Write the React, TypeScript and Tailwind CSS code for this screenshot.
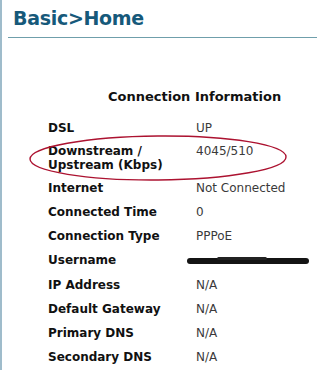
const rows: { label: string[]; value: string }[] = [
  { label: ["DSL"], value: "UP" },
  { label: ["Downstream /", "Upstream (Kbps)"], value: "4045/510" },
  { label: ["Internet"], value: "Not Connected" },
  { label: ["Connected Time"], value: "0" },
  { label: ["Connection Type"], value: "PPPoE" },
  { label: ["Username"], value: "" },
  { label: ["IP Address"], value: "N/A" },
  { label: ["Default Gateway"], value: "N/A" },
  { label: ["Primary DNS"], value: "N/A" },
  { label: ["Secondary DNS"], value: "N/A" },
];

export default function App() {
  return (
    <div className="relative w-[317px] h-[370px] overflow-hidden bg-white border-l-[2px] border-[#9fbccb] font-['DejaVu_Sans',sans-serif]">
      <div className="pl-[11px] pt-[6px]">
        <h1 className="text-[19px] leading-[24px] font-bold tracking-[-0.3px] text-[#16597a]">Basic&gt;Home</h1>
      </div>
      <div className="ml-[6px] mt-[7px] h-[1px] bg-[#6f9fab]"></div>

      <div className="mt-[51px] pl-[106px] text-[13px] leading-[16px] font-bold text-[#111]">
        Connection Information
      </div>

      <div className="mt-[11px] flex flex-col text-[12px] leading-[14px]">
        {rows.map((r) => (
          <div key={r.label[0]} className={`flex items-start ${r.label.length > 1 ? "py-[4px]" : "py-[5px]"}`}>
            <div className="w-[194px] shrink-0 pl-[46px] font-bold text-[#111]">
              {r.label.map((l) => (
                <div key={l}>{l}</div>
              ))}
            </div>
            <div className="text-[#3a3a3a]">
              {r.label[0] === "Username" ? (
                <div className="relative mt-[1px] -ml-[9px] h-[14px] w-[122px]">
                  <span className="absolute left-0 top-[4px] w-[122px] h-[6px] rounded-full bg-[#141414] blur-[0.7px]"></span>
                  <span className="absolute left-[30px] top-[3px] w-[50px] h-[3px] rounded-full bg-[#222] blur-[0.6px]"></span>
                </div>
              ) : (
                r.value
              )}
            </div>
          </div>
        ))}
      </div>

      <svg className="absolute left-0 top-0" width="317" height="370" viewBox="0 0 317 370">
        <ellipse cx="156" cy="158" rx="128" ry="22" fill="none" stroke="#ac1230" strokeWidth="1.4" transform="rotate(-0.5 156 158)" />
      </svg>
    </div>
  );
}
